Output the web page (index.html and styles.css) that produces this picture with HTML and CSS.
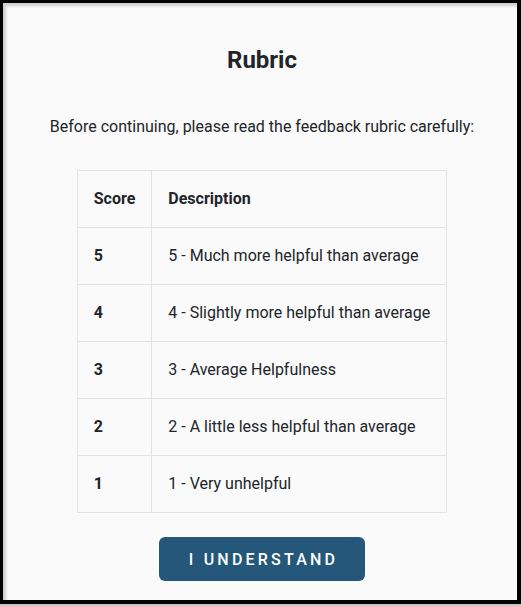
FILE: index.html
```html
<!DOCTYPE html>
<html>
<head>
<meta charset="utf-8">
<link rel="stylesheet" href="styles.css">
</head>
<body>
<div class="frame">
  <h1 class="title">Rubric</h1>
  <p class="intro">Before continuing, please read the feedback rubric carefully:</p>
  <table class="rubric">
    <thead>
      <tr><th>Score</th><th>Description</th></tr>
    </thead>
    <tbody>
      <tr><td class="score">5</td><td>5 - Much more helpful than average</td></tr>
      <tr><td class="score">4</td><td>4 - Slightly more helpful than average</td></tr>
      <tr><td class="score">3</td><td>3 - Average Helpfulness</td></tr>
      <tr><td class="score">2</td><td>2 - A little less helpful than average</td></tr>
      <tr><td class="score">1</td><td>1 - Very unhelpful</td></tr>
    </tbody>
  </table>
  <div class="actions">
    <button class="btn">I understand</button>
  </div>
</div>
</body>
</html>
```
FILE: styles.css
```css
html, body {
  margin: 0;
  padding: 0;
}
body {
  background: #c4c4c4;
  font-family: Roboto, "Liberation Sans", sans-serif;
  color: #212529;
}
.frame {
  box-sizing: border-box;
  width: 521px;
  height: 604px;
  background: #fafafa;
  border-style: solid;
  border-color: #000;
  border-width: 3px 4px 4px 3px;
  box-shadow: inset 3px 3px 3px rgba(0,0,0,0.18);
  padding: 42px 0 0 4px;
  display: flex;
  flex-direction: column;
  align-items: center;
}
.title {
  margin: 0;
  font-size: 24px;
  line-height: 30px;
  font-weight: 700;
}
.intro {
  margin: 40px 0 31px;
  font-size: 16px;
  line-height: 24px;
}
.rubric {
  border-collapse: collapse;
  font-size: 16px;
  line-height: 24px;
}
.rubric th, .rubric td {
  border: 1px solid #e3e3e3;
  padding: 16px;
  text-align: left;
}
.rubric th {
  font-weight: 700;
}
.rubric td.score {
  font-weight: 700;
}
.actions {
  margin-top: 24px;
}
.btn {
  background: #24577a;
  color: #fff;
  border: none;
  border-radius: 6px;
  height: 44px;
  width: 206px;
  font-family: Roboto, "Liberation Sans", sans-serif;
  font-size: 16px;
  font-weight: 500;
  letter-spacing: 3.2px;
  text-transform: uppercase;
  padding: 0 0 0 3px;
  cursor: pointer;
}
```
